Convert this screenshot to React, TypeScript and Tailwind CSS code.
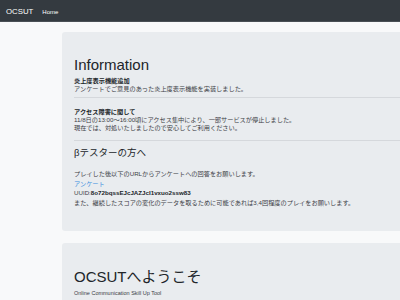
import React from 'react'

const font = { fontFamily: '"Liberation Sans", "Noto Sans CJK JP", sans-serif' }

export default function App() {
  return (
    <div className="w-[400px] h-[300px] overflow-hidden bg-[#f8f9fa] text-[#212529]" style={font}>
      {/* Navbar */}
      <nav className="h-[22px] bg-[#343a40] flex items-center px-[6px] pt-[2px] border-b border-[#4a4f55]">
        <span className="text-white text-[7.8px] leading-none">OCSUT</span>
        <span className="text-white text-[6px] leading-none ml-[9px]">Home</span>
      </nav>

      <main className="pl-[62px] pt-[10px] flex flex-col gap-[12px]">
        {/* Information */}
        <section className="w-[420px] h-[199px] bg-[#e9ecef] rounded-[3px] px-[12px] pt-[24px]">
          <h1 className="text-[15px] leading-[18px] font-normal">Information</h1>
          <div className="mt-[3px] text-[6.2px] leading-[8px]">
            <p className="font-bold">炎上度表示機能追加</p>
            <p className="text-[#3c4046]">アンケートでご意見のあった炎上度表示機能を実装しました。</p>
          </div>
          <hr className="my-[4px] border-t border-[#d5d8dc]" />
          <div className="pt-[6px] text-[6.2px] leading-[8px]">
            <p className="font-bold">アクセス障害に関して</p>
            <p className="text-[#3c4046]">11/8日の13:00〜16:00頃にアクセス集中により、一部サービスが停止しました。</p>
            <p className="text-[#3c4046]">現在では、対処いたしましたので安心してご利用ください。</p>
          </div>
          <hr className="mt-[8px] border-t border-[#d5d8dc]" />
          <h4 className="mt-[6px] text-[9.5px] leading-[12px]">βテスターの方へ</h4>
          <div className="mt-[10px] text-[6.2px] leading-[9.5px] text-[#3c4046]">
            <p>プレイした後以下のURLからアンケートへの回答をお願いします。</p>
            <p className="text-[#3b8fe0]">アンケート</p>
            <p>
              UUID:<span className="font-bold text-[#212529]">8o72bqssEJcJAZJcI1vxuo2ssw83</span>
            </p>
            <p>また、継続したスコアの変化のデータを取るために可能であれば3,4回程度のプレイをお願いします。</p>
          </div>
        </section>

        {/* Welcome */}
        <section className="w-[420px] h-[120px] bg-[#e9ecef] rounded-[3px] px-[12px] pt-[25px]">
          <h1 className="text-[15px] leading-[18px] font-normal">OCSUTへようこそ</h1>
          <p className="mt-[3px] text-[5.5px] leading-[8px] text-[#3c4046]">Online Communication Skill Up Tool</p>
        </section>
      </main>
    </div>
  )
}
